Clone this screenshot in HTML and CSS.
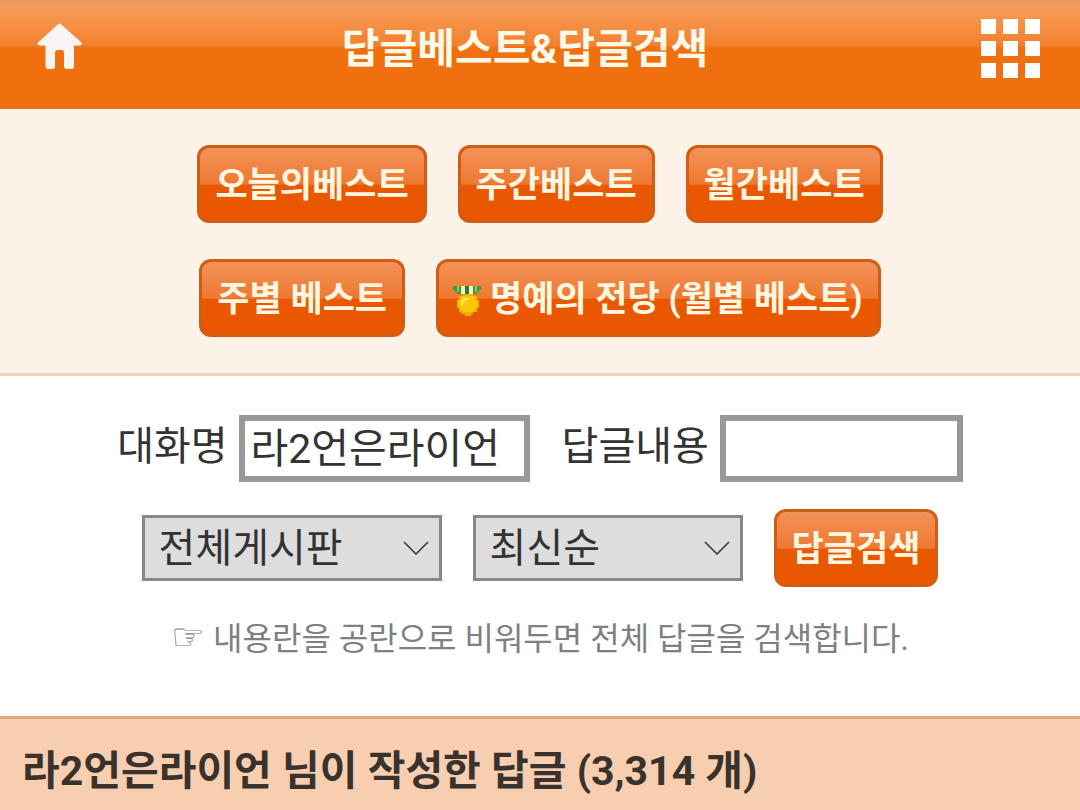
FILE: index.html
```html
<!DOCTYPE html>
<html lang="ko">
<head>
    <meta charset="UTF-8">
    <meta name="viewport" content="width=device-width, initial-scale=1.0">
    <title>답글베스트&amp;답글검색</title>
    <link rel="stylesheet" href="styles.css">
</head>
<body>

    <!-- 상단 -->
    <header class="top">
        <a href="#" class="top-link" aria-label="홈">
            <svg class="home-icon" width="46" height="46" viewBox="0 0 46 46">
                <path fill="#f6f5f4" d="M22.500 0L44.500 19.500Q46 21.500 43 22.500H37V43Q37 46 34 46H30Q27 46 27 43V30Q27 27 24.500 27H21Q18 27 18 30V43Q18 46 15 46H11.500Q8.500 46 8.500 43V22.500H3Q-1 21.500 1 19.500Z"/>
            </svg>
        </a>
        <h1>답글베스트&amp;답글검색</h1>
        <button type="button" class="top-link" aria-label="메뉴">
            <svg width="59" height="59" viewBox="0 0 59 59">
                <path fill="#fffefb" d="M0 0h15v15H0zM22 0h15v15H22zM44 0h15v15H44zM0 22h15v15H0zM22 22h15v15H22zM44 22h15v15H44zM0 44h15v15H0zM22 44h15v15H22zM44 44h15v15H44z"/>
            </svg>
        </button>
    </header>

    <!-- 베스트 메뉴 -->
    <nav class="best">
        <div class="row">
            <a href="#" class="btn">오늘의베스트</a>
            <a href="#" class="btn">주간베스트</a>
            <a href="#" class="btn">월간베스트</a>
        </div>
        <div class="row">
            <a href="#" class="btn">주별 베스트</a>
            <a href="#" class="btn btn-medal">
                <svg width="32" height="32" viewBox="0 0 16 16" aria-hidden="true" shape-rendering="crispEdges">
                    <path fill="#3f9b35" d="M1 1h14v2h-1v1h-1v1H3V4H2V3H1z"/>
                    <path fill="#8cc66b" d="M3 1h1v3H3zM12 1h1v3h-1z"/>
                    <path fill="#f4f2c8" d="M5 1h2v4H5zM9 1h2v4H9z"/>
                    <path fill="#2f7d22" d="M7 1h2v4H7z"/>
                    <path fill="#f0b400" d="M6 5h5v1h2v2h1v4h-1v2h-2v1h-1v1H7v-1H5v-1H4v-2H3V8h1V6h2z"/>
                    <path fill="#fbc80a" d="M5 6h7v2h1v4h-1v1h-1v1H6v-1H5v-1H4V8h1z"/>
                    <path fill="#ffe566" d="M6 7h3v1H7v1H6v2H5V8h1z"/>
                </svg>
                명예의 전당 (월별 베스트)
            </a>
        </div>
    </nav>

    <!-- 답글 검색 -->
    <form class="search">
        <div class="row fields">
            <div class="field">
                <label for="nick">대화명</label>
                <input type="text" id="nick" class="nick" value="라2언은라이언">
            </div>
            <div class="field">
                <label for="content">답글내용</label>
                <input type="text" id="content" class="content">
            </div>
        </div>
        <div class="row">
            <select class="board" aria-label="게시판">
                <option>전체게시판</option>
            </select>
            <select class="order" aria-label="정렬">
                <option>최신순</option>
            </select>
            <button type="button" class="btn">답글검색</button>
        </div>
        <p class="hint"><span class="hand">☞</span> 내용란을 공란으로 비워두면 전체 답글을 검색합니다.</p>
    </form>

    <!-- 검색 결과 -->
    <h2 class="result">라2언은라이언 님이 작성한 답글 (3,314 개)</h2>

</body>
</html>
```

FILE: styles.css
```css
* {
    box-sizing: border-box;
}
body {
    font-family: Roboto, "Noto Sans CJK KR", sans-serif;
    font-size: 40px;
    margin: 0;
    color: #333;
    background-color: #fff;
}
.top {
    display: flex;
    justify-content: space-between;
    align-items: flex-start;
    height: 109px;
    padding: 19px 40px 0 37px;
    background: linear-gradient(#ea995e 0, #f79a55 10px, #f3812e 45px, #f06f0e 48px, #f06f0e 107px, #d9701f 109px);
}
.top h1 {
    margin: 0 27px 0 0;
    font-size: 41px;
    line-height: 60px;
    color: #fff9e9;
}
.top-link {
    display: flex;
    width: 59px;
    padding: 0;
    border: none;
    background: none;
    cursor: pointer;
}
.home-icon {
    margin-top: 4px;
}
.best {
    display: flex;
    flex-direction: column;
    gap: 36px;
    padding: 36px 0;
    background-color: #fcf2e8;
    border-bottom: 3px solid #efd2b8;
}
.row {
    display: flex;
    justify-content: center;
    align-items: center;
    gap: 31px;
}
.btn {
    display: flex;
    align-items: center;
    height: 78px;
    padding: 3px 15px 0;
    border: 3px solid #d15c14;
    border-radius: 12px;
    background: linear-gradient(#f3945c, #ee7930 50%, #e95800 52%, #e95800) border-box;
    color: #fff6e0;
    font-family: inherit;
    font-size: 35px;
    font-weight: bold;
    line-height: 50px;
    text-decoration: none;
    cursor: pointer;
}
.btn-medal {
    gap: 7px;
    padding-left: 12px;
}
.search {
    padding: 39px 0 54px;
}
.fields {
    gap: 32px;
    margin-bottom: 27px;
}
.field {
    display: flex;
    align-items: center;
    gap: 11px;
}
.field label {
    padding-bottom: 3px;
    line-height: 58px;
}
.field input {
    height: 67px;
    padding: 0 6px 8px;
    border: 6px solid #999;
    border-radius: 0;
    background-color: #fff;
    color: #333;
    font: inherit;
    font-size: 41px;
}
.field .nick {
    width: 291px;
}
.field .content {
    width: 243px;
}
select {
    height: 66px;
    padding: 0 14px;
    border: 3px solid #888;
    border-radius: 0;
    appearance: none;
    background: #ddd url("data:image/svg+xml,%3Csvg xmlns='http://www.w3.org/2000/svg' width='26' height='14'%3E%3Cpath d='M1 1l12 12L25 1' fill='none' stroke='%23333' stroke-width='1.500'/%3E%3C/svg%3E") no-repeat right 10px center;
    color: #333;
    font: inherit;
}
.board {
    width: 300px;
}
.order {
    width: 270px;
}
.hint {
    margin: 29px 0 0;
    font-size: 32px;
    line-height: 46px;
    text-align: center;
    color: #808080;
}
.hand {
    font-family: "DejaVu Sans", sans-serif;
    font-size: 38px;
    line-height: 32px;
}
.result {
    margin: 0;
    padding: 22px 22px 20px;
    border-top: 3px solid #e5ab7e;
    background-color: #f7cfb0;
    font-size: 41px;
    line-height: 60px;
    color: #3a332d;
}
```
